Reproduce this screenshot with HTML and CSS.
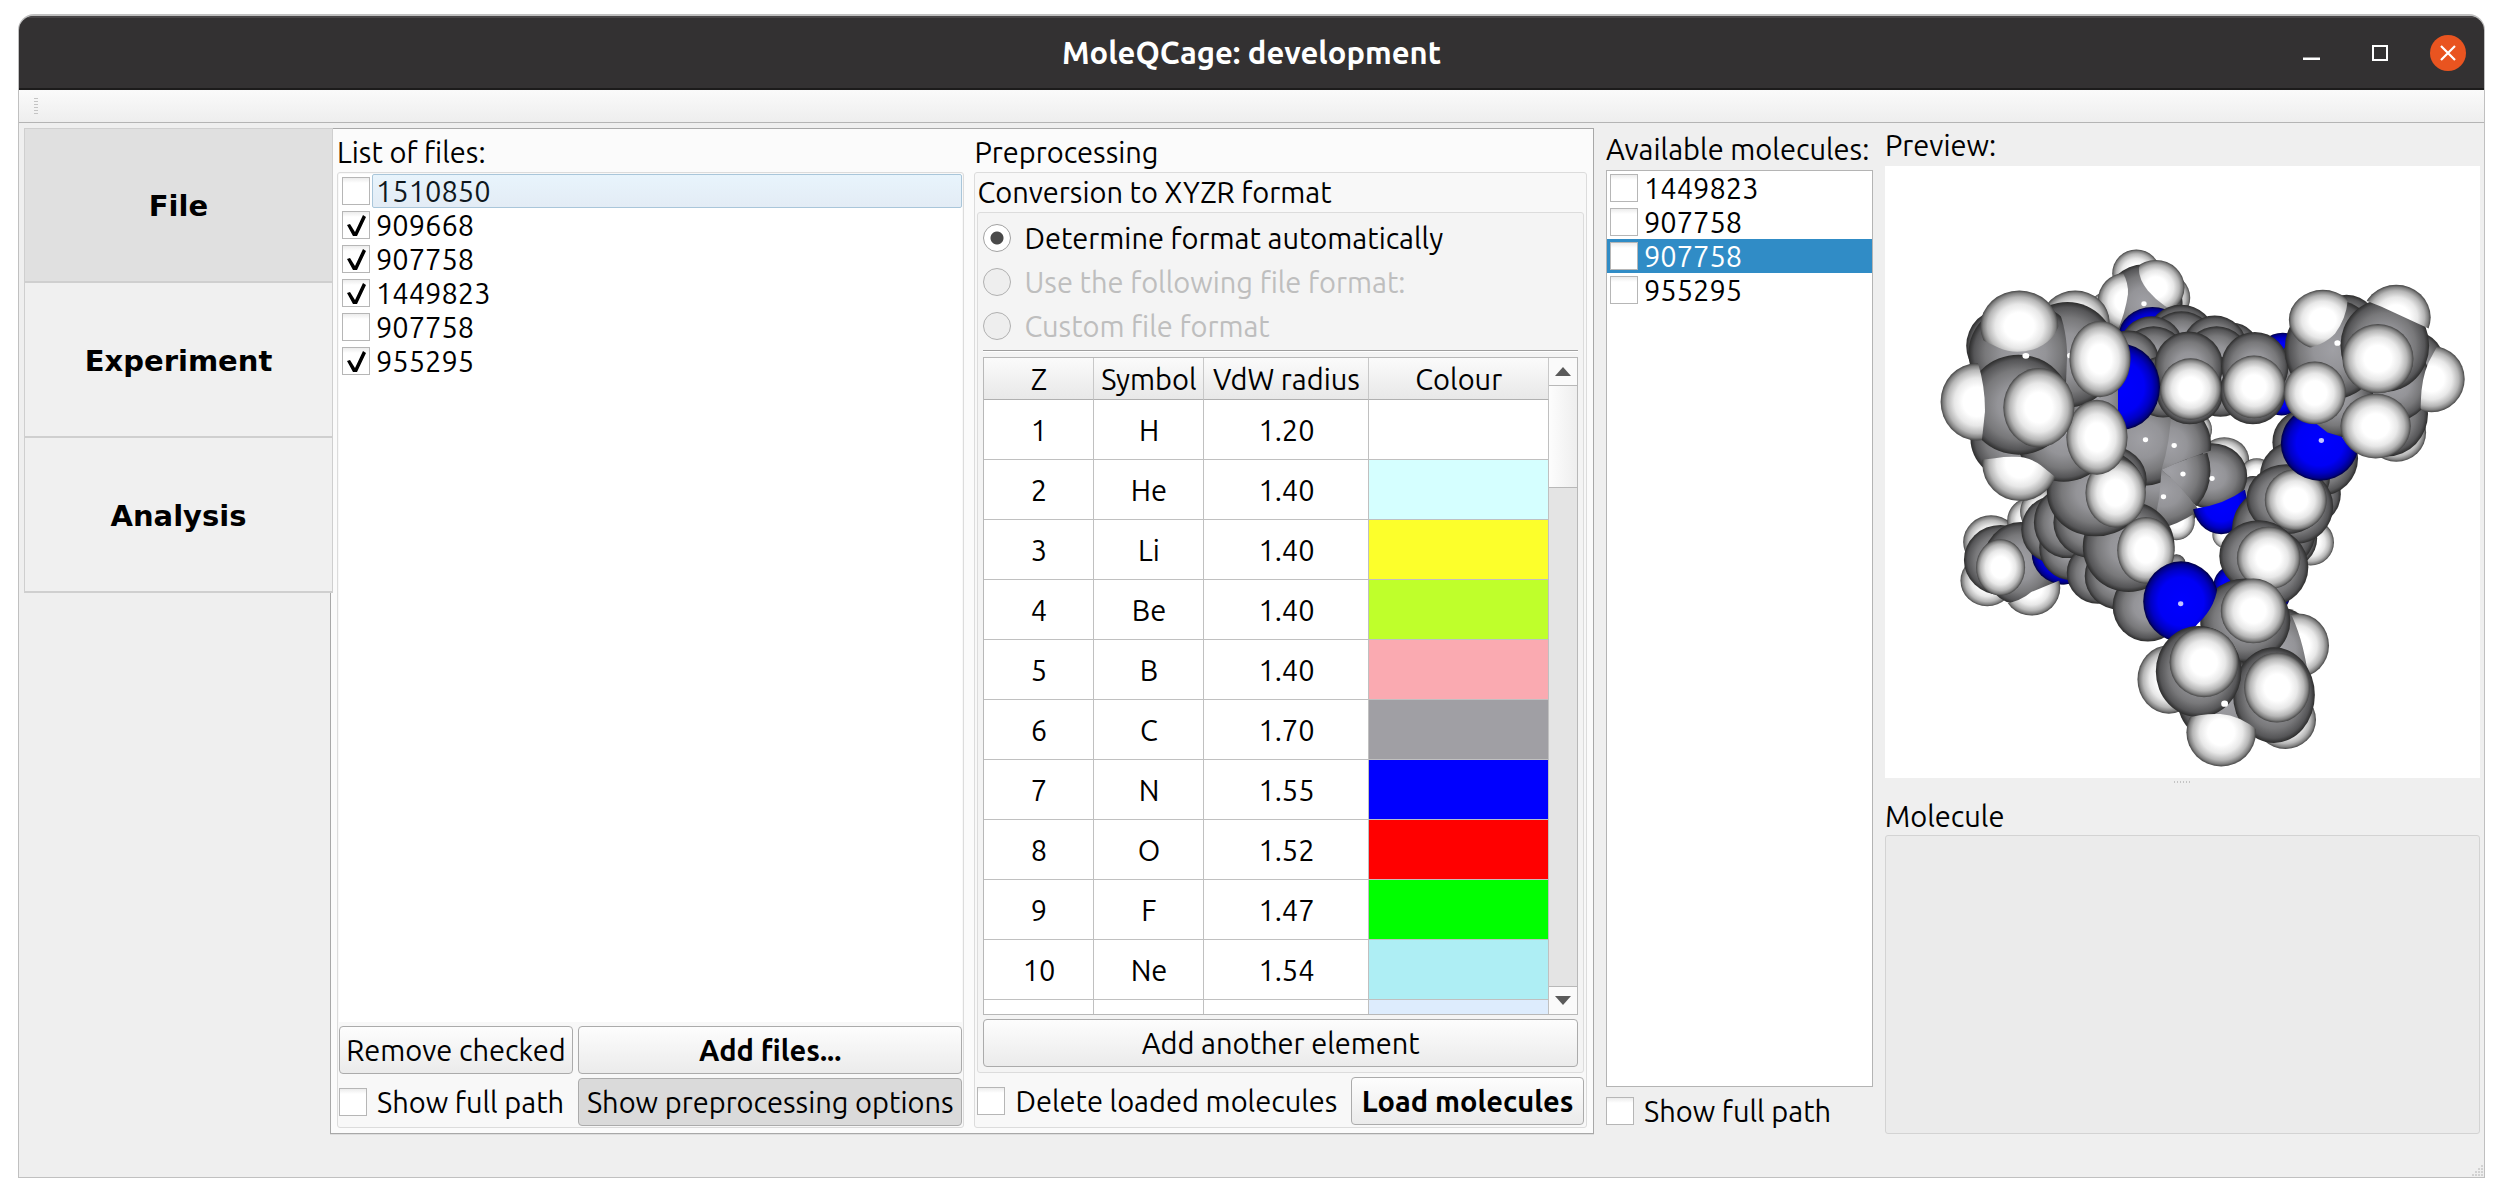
FILE: index.html
```html
<!DOCTYPE html>
<html lang="en">
<head>
<meta charset="utf-8">
<title>MoleQCage: development</title>
<link rel="stylesheet" href="styles.css">
</head>
<body>
<div class="window">
  <header class="titlebar">
    <h1 class="title">MoleQCage: development</h1>
    <div class="window-controls">
      <button class="control" aria-label="Minimise"><svg width="36" height="36" viewBox="0 0 36 36"><path d="M9 22.500h17v2.500h-17z" fill="#fff"/></svg></button>
      <button class="control" aria-label="Maximise"><svg width="36" height="36" viewBox="0 0 36 36"><rect x="11" y="11" width="14" height="14" fill="none" stroke="#fff" stroke-width="2"/></svg></button>
      <button class="control close" aria-label="Close"><svg width="36" height="36" viewBox="0 0 36 36"><path d="M11 11l14 14M25 11l-14 14" stroke="#fff" stroke-width="2.200"/></svg></button>
    </div>
  </header>
  <div class="toolbar"><span class="toolbar-handle"></span></div>

  <main class="workspace">
    <nav class="tabs">
      <button class="tab active">File</button>
      <button class="tab">Experiment</button>
      <button class="tab">Analysis</button>
    </nav>

    <div class="pane">
      <section class="column files">
        <h2 class="label">List of files:</h2>
        <div class="group">
          <ul class="list">
            <li class="item hover"><input class="check" type="checkbox" id="f1"><label for="f1">1510850</label></li>
            <li class="item"><input class="check" type="checkbox" id="f2" checked><label for="f2">909668</label></li>
            <li class="item"><input class="check" type="checkbox" id="f3" checked><label for="f3">907758</label></li>
            <li class="item"><input class="check" type="checkbox" id="f4" checked><label for="f4">1449823</label></li>
            <li class="item"><input class="check" type="checkbox" id="f5"><label for="f5">907758</label></li>
            <li class="item"><input class="check" type="checkbox" id="f6" checked><label for="f6">955295</label></li>
          </ul>
          <div class="file-actions">
            <button class="button">Remove checked</button>
            <button class="button strong">Add files...</button>
            <div class="option"><input class="check" type="checkbox" id="fp1"><label for="fp1">Show full path</label></div>
            <button class="button pressed">Show preprocessing options</button>
          </div>
        </div>
      </section>

      <section class="column preprocessing">
        <h2 class="label">Preprocessing</h2>
        <div class="group">
          <h3 class="sublabel">Conversion to XYZR format</h3>
          <div class="subgroup">
            <div class="radios">
              <div class="option wide"><input class="radio" type="radio" name="format" id="r1" checked><label for="r1">Determine format automatically</label></div>
              <div class="option wide"><input class="radio" type="radio" name="format" id="r2" disabled><label for="r2">Use the following file format:</label></div>
              <div class="option wide"><input class="radio" type="radio" name="format" id="r3" disabled><label for="r3">Custom file format</label></div>
            </div>
            <hr class="rule">
            <div class="table-view">
              <div class="table-clip">
                <table class="elements">
                  <colgroup><col class="c-z"><col class="c-symbol"><col class="c-radius"><col></colgroup>
                  <thead><tr><th>Z</th><th>Symbol</th><th>VdW radius</th><th>Colour</th></tr></thead>
                  <tbody>
                    <tr><td>1</td><td>H</td><td>1.20</td><td class="h"></td></tr>
                    <tr><td>2</td><td>He</td><td>1.40</td><td class="he"></td></tr>
                    <tr><td>3</td><td>Li</td><td>1.40</td><td class="li"></td></tr>
                    <tr><td>4</td><td>Be</td><td>1.40</td><td class="be"></td></tr>
                    <tr><td>5</td><td>B</td><td>1.40</td><td class="b"></td></tr>
                    <tr><td>6</td><td>C</td><td>1.70</td><td class="c"></td></tr>
                    <tr><td>7</td><td>N</td><td>1.55</td><td class="n"></td></tr>
                    <tr><td>8</td><td>O</td><td>1.52</td><td class="o"></td></tr>
                    <tr><td>9</td><td>F</td><td>1.47</td><td class="f"></td></tr>
                    <tr><td>10</td><td>Ne</td><td>1.54</td><td class="ne"></td></tr>
                    <tr><td></td><td></td><td></td><td class="na"></td></tr>
                  </tbody>
                </table>
              </div>
              <div class="scrollbar">
                <button class="arrow up" aria-label="Scroll up"></button>
                <div class="thumb"></div>
                <button class="arrow down" aria-label="Scroll down"></button>
              </div>
            </div>
            <button class="button">Add another element</button>
          </div>
          <div class="load-row">
            <div class="option"><input class="check" type="checkbox" id="del"><label for="del">Delete loaded molecules</label></div>
            <button class="button strong">Load molecules</button>
          </div>
        </div>
      </section>
    </div>

    <section class="available">
      <h2 class="label">Available molecules:</h2>
      <ul class="list framed">
        <li class="item"><input class="check" type="checkbox" id="m1"><label for="m1">1449823</label></li>
        <li class="item"><input class="check" type="checkbox" id="m2"><label for="m2">907758</label></li>
        <li class="item selected"><input class="check" type="checkbox" id="m3"><label for="m3">907758</label></li>
        <li class="item"><input class="check" type="checkbox" id="m4"><label for="m4">955295</label></li>
      </ul>
      <div class="option"><input class="check" type="checkbox" id="fp2"><label for="fp2">Show full path</label></div>
    </section>

    <section class="preview">
      <h2 class="label">Preview:</h2>
      <div class="viewport">
        <svg class="molecule" viewBox="0 0 595 613" role="img" aria-label="Molecule preview">
          <defs>
            <radialGradient id="gh"><stop offset="0" stop-color="#fff"/><stop offset=".38" stop-color="#fff"/><stop offset=".62" stop-color="#e8e8e8"/><stop offset=".82" stop-color="#b6b6b6"/><stop offset=".93" stop-color="#808080"/><stop offset="1" stop-color="#444"/></radialGradient>
            <radialGradient id="gc"><stop offset="0" stop-color="#a0a0a5"/><stop offset=".4" stop-color="#949498"/><stop offset=".7" stop-color="#78787a"/><stop offset=".9" stop-color="#555557"/><stop offset="1" stop-color="#2c2c2c"/></radialGradient>
            <radialGradient id="gn"><stop offset="0" stop-color="#00f"/><stop offset=".6" stop-color="#0000f6"/><stop offset=".8" stop-color="#0000c4"/><stop offset=".93" stop-color="#00008a"/><stop offset="1" stop-color="#000040"/></radialGradient>
            <clipPath id="k1"><path d="M500 100L585 120Q600 150 598 180Q592 230 568 290L500 290Z"/></clipPath>
            <clipPath id="k2"><path d="M640 70L627 105Q624 135 650 170Q690 220 745 240L800 150L700 60Z"/></clipPath>
            <clipPath id="k3"><path d="M1180 130L1215 200L1225 200L1260 215L1388 278L1420 150Z"/></clipPath>
            <clipPath id="k4"><path d="M1420 300L1395 350Q1372 390 1366 450L1363 500L1390 530L1500 530L1500 300Z"/></clipPath>
            <clipPath id="k5"><path d="M1000 150L1165 170L1173 200Q1168 250 1140 290Q1110 325 1050 335L1000 335Z"/></clipPath>
            <clipPath id="k6"><path d="M980 480L1060 535L1090 543L1120 568L1157 580L1170 600L1210 630L1210 720L980 720Z"/></clipPath>
            <clipPath id="w2"><path d="M686 672Q708 600 712 500L840 500L840 610Q750 640 686 672Z"/></clipPath>
            <clipPath id="w3"><path d="M686 672Q750 640 815 622L830 700L780 780Q740 720 686 672Z"/></clipPath>
            <clipPath id="w4"><path d="M686 672Q740 720 780 780L770 860L660 860L680 750Z"/></clipPath>
            <clipPath id="k7"><path d="M760 785L780 780Q850 770 904 728L940 900L760 900Z"/></clipPath>
            <clipPath id="k8"><path d="M680 838Q730 825 772 795L790 890L680 890Z"/></clipPath>
            <clipPath id="k9"><path d="M150 200L405 200Q437 260 439 350L436 430L150 430Z"/></clipPath>
            <clipPath id="ka"><path d="M200 150L420 150L420 260Q405 315 350 335Q300 350 260 330L200 300Z"/></clipPath>
            <clipPath id="kb"><path d="M90 370L205 370Q225 440 224 510L215 600L90 600Z"/></clipPath>
            <clipPath id="kd"><path d="M572 300L700 300L700 580L572 580Z"/></clipPath>
            <clipPath id="kf"><path d="M210 645L250 640Q330 625 370 660L412 696L430 780L210 780Z"/></clipPath>
            <clipPath id="kg"><path d="M270 1050Q320 1040 345 1015L425 980L430 1100L270 1100Z"/></clipPath>
            <clipPath id="kh"><path d="M600 900L850 900L833 980Q835 1050 780 1105L730 1170L600 1170Z"/></clipPath>
            <clipPath id="ki"><path d="M1010 1060L1028 1085Q1060 1160 1072 1270L1140 1260L1140 1060Z"/></clipPath>
            <clipPath id="kl"><path d="M740 1372Q790 1355 840 1357Q890 1360 940 1405L940 1520L740 1520Z"/></clipPath>
          </defs>
          <g transform="translate(14 64) scale(.3827 .3571)">
            <g fill="url(#gh)"><ellipse cx="620" cy="122" rx="63" ry="67"/><ellipse cx="697" cy="190" rx="64" ry="68"/><ellipse cx="540" cy="220" rx="42" ry="45"/></g>
            <ellipse fill="url(#gc)" cx="640" cy="205" rx="101" ry="109"/>
            <g clip-path="url(#k1)"><ellipse fill="url(#gh)" cx="592" cy="200" rx="73" ry="80"/></g>
            <g clip-path="url(#k2)"><ellipse fill="url(#gh)" cx="671" cy="161" rx="75" ry="77"/></g>
            <ellipse fill="url(#gn)" cx="662" cy="297" rx="88" ry="81"/>
            <g fill="url(#gc)">
              <ellipse cx="737" cy="298" rx="88" ry="88"/><ellipse cx="738" cy="318" rx="88" ry="90"/>
              <ellipse cx="870" cy="340" rx="72" ry="80"/><ellipse cx="825" cy="328" rx="84" ry="88"/><ellipse cx="660" cy="330" rx="84" ry="88"/>
            </g>
            <g fill="url(#gn)"><ellipse cx="1003" cy="360" rx="68" ry="72"/><ellipse cx="1000" cy="458" rx="58" ry="62"/></g>
            <g fill="url(#gc)">
              <ellipse cx="830" cy="362" rx="86" ry="92"/><ellipse cx="665" cy="362" rx="86" ry="92"/><ellipse cx="600" cy="370" rx="80" ry="88"/>
            </g>
            <g fill="url(#gh)"><ellipse cx="770" cy="560" rx="48" ry="50"/><ellipse cx="850" cy="645" rx="65" ry="64"/><ellipse cx="935" cy="690" rx="46" ry="50"/><ellipse cx="855" cy="855" rx="36" ry="38"/></g>
            <ellipse fill="url(#gc)" cx="925" cy="740" rx="42" ry="50"/>
            <g fill="url(#gc)">
              <ellipse cx="818" cy="690" rx="92" ry="92"/>
              <ellipse cx="670" cy="670" rx="130" ry="150"/>
              <ellipse cx="636" cy="587" rx="130" ry="130"/>
              <g clip-path="url(#w2)"><ellipse cx="710" cy="604" rx="106" ry="120"/></g>
              <g clip-path="url(#w3)"><ellipse cx="708" cy="676" rx="106" ry="130"/></g>
              <g clip-path="url(#w4)"><ellipse cx="691" cy="733" rx="116" ry="106"/></g>
            </g>
            <g clip-path="url(#k7)"><ellipse fill="url(#gn)" cx="842" cy="765" rx="75" ry="88"/></g>
            <g clip-path="url(#k8)"><ellipse fill="url(#gh)" cx="725" cy="815" rx="48" ry="55"/></g>
            <g fill="url(#gc)">
              <ellipse cx="690" cy="440" rx="80" ry="86"/><ellipse cx="840" cy="440" rx="80" ry="84"/><ellipse cx="760" cy="452" rx="88" ry="93"/><ellipse cx="925" cy="452" rx="86" ry="93"/>
              <ellipse cx="757" cy="382" rx="90" ry="97"/><ellipse cx="1060" cy="390" rx="70" ry="90"/><ellipse cx="930" cy="382" rx="88" ry="96"/>
            </g>
            <g fill="url(#gn)"><ellipse cx="875" cy="1000" rx="54" ry="60"/><ellipse cx="965" cy="1020" rx="58" ry="60"/></g>
            <ellipse fill="url(#gh)" cx="1076" cy="876" rx="61" ry="65"/>
            <g fill="url(#gc)">
              <ellipse cx="1070" cy="740" rx="85" ry="90"/><ellipse cx="1100" cy="640" rx="100" ry="106"/><ellipse cx="1062" cy="595" rx="86" ry="92"/><ellipse cx="1035" cy="690" rx="92" ry="98"/>
              <ellipse cx="1015" cy="865" rx="78" ry="82"/><ellipse cx="980" cy="840" rx="110" ry="118"/><ellipse cx="1035" cy="775" rx="100" ry="106"/><ellipse cx="1012" cy="755" rx="104" ry="98"/>
            </g>
            <ellipse fill="url(#gh)" cx="1037" cy="757" rx="81" ry="86"/>
            <g fill="url(#gc)"><ellipse cx="965" cy="945" rx="105" ry="110"/><ellipse cx="940" cy="914" rx="103" ry="100"/></g>
            <ellipse fill="url(#gh)" cx="966" cy="920" rx="83" ry="88"/>

            <ellipse fill="url(#gh)" cx="1300" cy="568" rx="78" ry="82"/>
            <g fill="url(#gc)"><ellipse cx="1170" cy="290" rx="90" ry="108"/><ellipse cx="1350" cy="390" rx="80" ry="105"/><ellipse cx="1275" cy="515" rx="108" ry="120"/><ellipse cx="1300" cy="430" rx="92" ry="105"/><ellipse cx="1140" cy="470" rx="100" ry="112"/></g>
            <ellipse fill="url(#gc)" cx="1133" cy="335" rx="125" ry="140"/>
            <g clip-path="url(#k4)"><ellipse fill="url(#gh)" cx="1392" cy="418" rx="87" ry="93"/></g>
            <ellipse fill="url(#gc)" cx="1270" cy="324" rx="116" ry="130"/>
            <g clip-path="url(#k3)"><ellipse fill="url(#gh)" cx="1300" cy="245" rx="90" ry="91"/></g>
            <g clip-path="url(#k5)"><ellipse fill="url(#gh)" cx="1108" cy="252" rx="89" ry="84"/></g>
            <g clip-path="url(#k6)"><ellipse fill="url(#gn)" cx="1100" cy="598" rx="102" ry="105"/></g>
            <g fill="url(#gh)"><ellipse cx="762" cy="446" rx="80" ry="86"/><ellipse cx="928" cy="440" rx="81" ry="88"/><ellipse cx="1087" cy="457" rx="81" ry="88"/><ellipse cx="1246" cy="550" rx="92" ry="91"/><ellipse cx="1252" cy="361" rx="93" ry="97"/></g>

            <g fill="url(#gn)"><ellipse cx="430" cy="740" rx="52" ry="56"/><ellipse cx="425" cy="908" rx="86" ry="86"/></g>
            <g fill="url(#gh)"><ellipse cx="240" cy="875" rx="73" ry="75"/><ellipse cx="343" cy="815" rx="61" ry="64"/><ellipse cx="378" cy="790" rx="62" ry="66"/><ellipse cx="230" cy="983" rx="70" ry="72"/></g>
            <g fill="url(#gc)"><ellipse cx="265" cy="925" rx="96" ry="98"/><ellipse cx="318" cy="935" rx="100" ry="116"/></g>
            <ellipse fill="url(#gn)" cx="430" cy="905" rx="84" ry="89"/>
            <g clip-path="url(#kg)"><ellipse fill="url(#gh)" cx="346" cy="1003" rx="75" ry="78"/></g>
            <ellipse fill="url(#gh)" cx="265" cy="946" rx="64" ry="79"/>
            <g fill="url(#gc)">
              <ellipse cx="405" cy="840" rx="86" ry="94"/><ellipse cx="450" cy="890" rx="84" ry="92"/><ellipse cx="440" cy="820" rx="88" ry="100"/><ellipse cx="520" cy="962" rx="82" ry="86"/>
              <ellipse cx="575" cy="970" rx="90" ry="94"/><ellipse cx="650" cy="1055" rx="92" ry="99"/><ellipse cx="505" cy="820" rx="102" ry="100"/><ellipse cx="725" cy="935" rx="24" ry="26"/>
              <ellipse cx="600" cy="888" rx="120" ry="127"/><ellipse cx="550" cy="700" rx="97" ry="95"/><ellipse cx="514" cy="735" rx="128" ry="124"/>
            </g>
            <g fill="url(#gh)"><ellipse cx="645" cy="898" rx="75" ry="93"/><ellipse cx="566" cy="737" rx="79" ry="97"/></g>

            <ellipse fill="url(#gh)" cx="460" cy="258" rx="90" ry="88"/>
            <g fill="url(#gc)"><ellipse cx="310" cy="585" rx="124" ry="120"/><ellipse cx="430" cy="580" rx="124" ry="126"/><ellipse cx="510" cy="470" rx="100" ry="106"/><ellipse cx="440" cy="350" rx="130" ry="148"/><ellipse cx="275" cy="325" rx="100" ry="106"/></g>
            <g clip-path="url(#k9)"><ellipse fill="url(#gc)" cx="325" cy="345" rx="144" ry="140"/></g>
            <g clip-path="url(#ka)"><ellipse fill="url(#gh)" cx="314" cy="270" rx="102" ry="100"/></g>
            <g clip-path="url(#kd)"><ellipse fill="url(#gn)" cx="578" cy="440" rx="104" ry="121"/></g>
            <g clip-path="url(#kf)"><ellipse fill="url(#gh)" cx="316" cy="655" rx="99" ry="105"/></g>
            <g fill="#fff"><ellipse cx="447" cy="352" rx="8" ry="8"/><ellipse cx="445" cy="567" rx="8" ry="8"/></g>
            <g fill="url(#gh)"><ellipse cx="525" cy="362" rx="80" ry="107"/><ellipse cx="517" cy="581" rx="80" ry="105"/></g>
            <ellipse fill="url(#gc)" cx="312" cy="490" rx="136" ry="140"/>
            <g clip-path="url(#kb)"><ellipse fill="url(#gh)" cx="203" cy="482" rx="95" ry="108"/></g>
            <ellipse fill="url(#gh)" cx="365" cy="498" rx="93" ry="111"/>

            <ellipse fill="url(#gh)" cx="1010" cy="1373" rx="80" ry="82"/>
            <g fill="url(#gc)"><ellipse cx="1000" cy="1175" rx="92" ry="115"/><ellipse cx="905" cy="1095" rx="118" ry="118"/></g>
            <g clip-path="url(#kh)"><ellipse fill="url(#gn)" cx="737" cy="1042" rx="99" ry="113"/></g>
            <g clip-path="url(#ki)"><ellipse fill="url(#gh)" cx="1042" cy="1165" rx="82" ry="90"/></g>
            <ellipse fill="url(#gh)" cx="705" cy="1260" rx="82" ry="96"/>
            <g fill="url(#gc)"><ellipse cx="850" cy="1320" rx="122" ry="120"/><ellipse cx="980" cy="1304" rx="107" ry="134"/><ellipse cx="783" cy="1238" rx="112" ry="128"/></g>
            <g clip-path="url(#kl)"><ellipse fill="url(#gh)" cx="842" cy="1408" rx="91" ry="96"/></g>
            <g fill="url(#gh)"><ellipse cx="926" cy="1068" rx="85" ry="91"/><ellipse cx="797" cy="1212" rx="90" ry="98"/><ellipse cx="988" cy="1283" rx="86" ry="98"/></g>
            <g fill="#fff"><ellipse cx="640" cy="207" rx="7" ry="7"/><ellipse cx="331" cy="353" rx="9" ry="8"/><ellipse cx="1146" cy="317" rx="8" ry="8"/><ellipse cx="644" cy="588" rx="7" ry="7"/><ellipse cx="719" cy="604" rx="7" ry="7"/><ellipse cx="742" cy="684" rx="7" ry="7"/><ellipse cx="818" cy="697" rx="7" ry="7"/><ellipse cx="691" cy="748" rx="7" ry="7"/><ellipse cx="851" cy="1328" rx="9" ry="9"/></g>
            <g fill="#c4c4ff"><ellipse cx="736" cy="1048" rx="7" ry="7"/><ellipse cx="1104" cy="590" rx="7" ry="7"/></g>
          </g>
        </svg>
      </div>
      <div class="splitter"></div>
      <h2 class="label molecule-label">Molecule</h2>
      <div class="details"></div>
    </section>
  </main>
  <footer class="statusbar"><svg class="grip" width="12" height="12" viewBox="0 0 12 12"><path d="M9 1h2M6 4h2M9 4h2M3 7h2M6 7h2M9 7h2M0 10h2M3 10h2M6 10h2M9 10h2" stroke="#b4b4b4"/></svg></footer>
</div>
</body>
</html>
```
FILE: styles.css
```css
* { box-sizing: border-box; }

body {
  margin: 0;
  padding: 14px 19px 19px 18px;
  min-height: 100vh;
  display: flex;
  background: #fff;
  color: #000;
  font: 29px/34px "Ubuntu", "Noto Sans", sans-serif;
}

h1, h2, h3, ul { margin: 0; padding: 0; font-size: inherit; font-weight: normal; }
ul { list-style: none; }
button, input { font: inherit; color: inherit; margin: 0; }

.window {
  flex: 1;
  min-width: 0;
  display: flex;
  flex-direction: column;
  border: 1px solid #c0c0c0;
  border-top-width: 2px;
  border-radius: 16px 16px 0 0;
  background: #efefef;
  overflow: hidden;
}

.titlebar {
  height: 74px;
  display: grid;
  grid-template-columns: 1fr auto 1fr;
  align-items: center;
  padding-right: 18px;
  background: #333132;
  border-top: 2px solid #474546;
  border-bottom: 2px solid #1c1b1b;
  color: #fff;
}
.title { grid-column: 2; padding-left: 18px; font-size: 31px; font-weight: bold; }
.window-controls { display: flex; justify-content: flex-end; gap: 32px; }
.control { width: 36px; height: 36px; padding: 0; border: 0; border-radius: 50%; background: none; }
.control svg { display: block; }
.close { background: #e95420; }

.toolbar {
  height: 33px;
  padding: 8px 15px;
  background: linear-gradient(#fafafa, #eee);
  border-bottom: 1px solid #b4b4b4;
}
.toolbar-handle {
  display: block;
  width: 4px;
  height: 16px;
  background: repeating-linear-gradient(#c4c4c4 0 1px, transparent 1px 3px);
}

.workspace {
  flex: 1;
  display: grid;
  grid-template-columns: 306px minmax(0, 1252fr) 267px minmax(0, 595fr);
  column-gap: 12px;
  padding: 5px 4px 0 5px;
}

.tabs { margin-right: -3px; z-index: 1; }
.tab {
  display: block;
  width: 100%;
  height: 155px;
  padding: 2px 0 0;
  background: #f0f0f0;
  border: 1px solid #cfcfcf;
  border-bottom-width: 2px;
  font: bold 29px/34px "DejaVu Sans", sans-serif;
}
.tab + .tab { border-top: 0; }
.tab.active { background: #e0e0e0; }

.pane {
  margin-left: -12px;
  display: grid;
  grid-template-columns: 628fr 613fr;
  column-gap: 10px;
  padding: 6px 6px 5px;
  background: #fbfbfb;
  border: 1px solid #a8a8a8;
  box-shadow: 0 1px #ddd;
}
.column { display: flex; flex-direction: column; min-width: 0; }
.label { height: 37px; white-space: nowrap; }
.group {
  flex: 1;
  display: flex;
  flex-direction: column;
  padding: 1px;
  background: #f8f8f8;
  border: 1px solid #dcdcdc;
  border-radius: 3px;
}

.list { flex: 1; background: #fff; }
.list.framed { border: 1px solid #b4b4b4; }
.item { display: flex; align-items: center; height: 34px; padding-left: 3px; gap: 2px; }
.item label { flex: 1; height: 34px; line-height: 32px; padding-left: 3px; border: 1px solid transparent; }
.item.hover label { background: linear-gradient(#e8f4fc, #e3ecf5); border-color: #a9c6da; border-radius: 2px; color: #0e181e; }
.item.selected { background: #308cc6; color: #fff; }

.check {
  appearance: none;
  flex: none;
  width: 28px;
  height: 28px;
  background: linear-gradient(#ececec, #fff 5px);
  border: 1px solid #b6b6b6;
}
.check:checked::before {
  content: "";
  display: block;
  width: 26px;
  height: 26px;
  background: #000;
  clip-path: polygon(4px 13px, 7px 12px, 12px 20px, 20px 3px, 23px 5px, 14px 24px, 10px 24px);
}
.radio {
  appearance: none;
  flex: none;
  width: 28px;
  height: 28px;
  border: 1px solid #a2a2a2;
  border-radius: 50%;
  background: #fff;
}
.radio:checked { background: radial-gradient(#4a4a4a 6px, #fff 7px); }
.radio:disabled { background: #eee; border-color: #b0b0b0; }
.radio:disabled + label { color: #bebebe; }

.option { display: flex; align-items: center; gap: 10px; white-space: nowrap; }

.button {
  height: 48px;
  padding: 0 4px;
  border: 1px solid #ababab;
  border-radius: 4px;
  background: linear-gradient(#fdfdfd, #ebebeb);
  white-space: nowrap;
}
.button.strong { font-weight: bold; }
.button.pressed { background: #dadada; }

.file-actions {
  display: grid;
  grid-template-columns: 234px minmax(0, 1fr);
  gap: 4px 5px;
  padding-top: 4px;
}

.sublabel { height: 38px; padding: 1px; }
.subgroup {
  flex: 1;
  display: flex;
  flex-direction: column;
  margin: 0 1px;
  padding: 3px 5px 5px;
  background: #f4f4f4;
  border: 1px solid #dcdcdc;
  border-radius: 3px;
}
.option.wide { height: 44px; gap: 13px; }
.rule { width: 100%; height: 2px; margin: 2px 0 5px; border: 0; border-top: 1px solid #a0a0a0; background: #fff; }

.table-view { flex: 1 1 0; min-height: 0; display: flex; margin-bottom: 4px; border: 1px solid #b8b8b8; background: #fff; }
.table-clip { flex: 1; height: 100%; overflow: hidden; contain: size; }
.elements { width: 100%; table-layout: fixed; border-collapse: separate; border-spacing: 0; text-align: center; }
.c-z, .c-symbol { width: 110px; }
.c-radius { width: 165px; }
.elements th { height: 42px; padding: 0; font-weight: normal; white-space: nowrap; background: linear-gradient(#fbfbfb, #e8e8e8); border-right: 1px solid #c8c8c8; border-bottom: 1px solid #b0b0b0; }
.elements td { height: 60px; padding: 0; border-right: 1px solid #c0c0c0; border-bottom: 1px solid #c0c0c0; }
.elements .he { background: #d5ffff; }
.elements .li { background: #fcff2b; }
.elements .be { background: #bfff2b; }
.elements .b { background: #faaab1; }
.elements .c { background: #a09fa4; }
.elements .n { background: #00f; }
.elements .o { background: #f00; }
.elements .f { background: #0f0; }
.elements .ne { background: #aeeef4; }
.elements .na { background: #ddecfd; }

.scrollbar { width: 28px; display: flex; flex-direction: column; background: #e4e4e4; }
.arrow { height: 28px; padding: 0; border: 0; background: #fafafa; display: grid; place-items: center; }
.arrow::before { content: ""; border: 8px solid transparent; }
.arrow.up { border-bottom: 1px solid #b8b8b8; }
.arrow.up::before { border-top: 0; border-bottom: 9px solid #5a5a5a; }
.arrow.down { margin-top: auto; border-top: 1px solid #b8b8b8; }
.arrow.down::before { border-bottom: 0; border-top: 9px solid #5a5a5a; }
.thumb { height: 102px; background: linear-gradient(90deg, #fdfdfd, #eee); border-bottom: 1px solid #b8b8b8; }

.load-row { display: grid; grid-template-columns: 1fr 233px; gap: 4px; padding: 4px 1px 1px 1px; }

.available { display: flex; flex-direction: column; }
.available .label { height: 42px; padding-top: 4px; }
.available .option { height: 47px; }

.preview { display: flex; flex-direction: column; min-width: 0; }
.preview .label { height: 38px; padding-top: 0; }
.viewport { flex: 613 1 0; min-height: 0; background: #fff; display: flex; contain: size; }
.molecule { width: 100%; height: 100%; }
.splitter { height: 21px; background: repeating-linear-gradient(90deg, #c4c4c4 0 1px, transparent 1px 3px) center 3px / 17px 2px no-repeat; }
.preview .molecule-label { height: 36px; }
.details { flex: 297 1 0; background: #ebebeb; border: 1px solid #d3d3d3; border-radius: 3px; }

.statusbar { height: 43px; display: flex; justify-content: flex-end; align-items: flex-end; }
.grip { display: block; }
```
